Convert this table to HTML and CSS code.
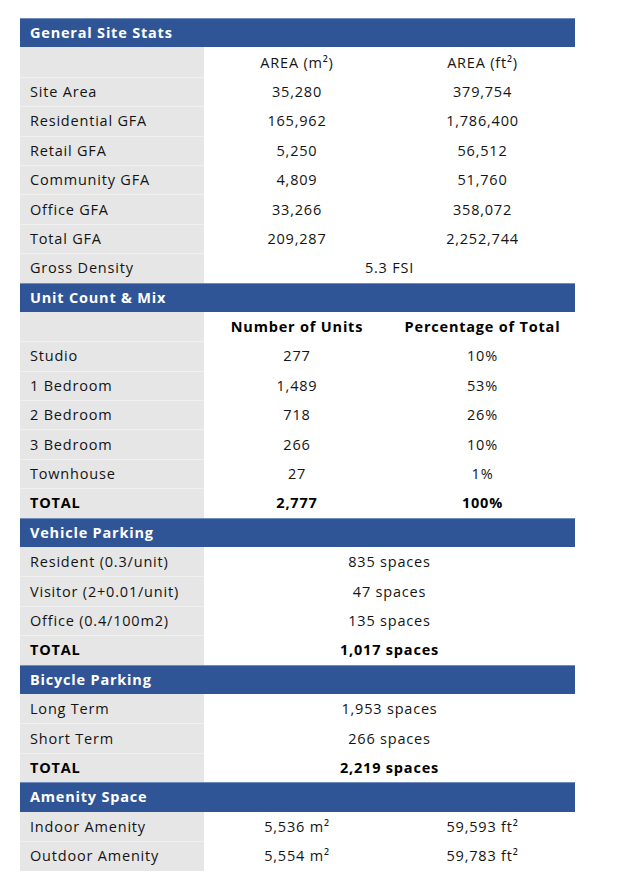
FILE: index.html
```html
<!DOCTYPE html>
<html>
<head>
<meta charset="utf-8">
<link rel="stylesheet" href="styles.css">
</head>
<body>
<table class="stats">
  <colgroup><col class="c1"><col class="c2"><col class="c3"></colgroup>
  <tbody>
    <tr class="sec"><th colspan="3">General Site Stats</th></tr>
    <tr><td class="lbl"></td><td>AREA (m²)</td><td>AREA (ft²)</td></tr>
    <tr><td class="lbl">Site Area</td><td>35,280</td><td>379,754</td></tr>
    <tr><td class="lbl">Residential GFA</td><td>165,962</td><td>1,786,400</td></tr>
    <tr><td class="lbl">Retail GFA</td><td>5,250</td><td>56,512</td></tr>
    <tr><td class="lbl">Community GFA</td><td>4,809</td><td>51,760</td></tr>
    <tr><td class="lbl">Office GFA</td><td>33,266</td><td>358,072</td></tr>
    <tr><td class="lbl">Total GFA</td><td>209,287</td><td>2,252,744</td></tr>
    <tr><td class="lbl">Gross Density</td><td colspan="2">5.3 FSI</td></tr>

    <tr class="sec"><th colspan="3">Unit Count &amp; Mix</th></tr>
    <tr class="bold"><td class="lbl"></td><td>Number of Units</td><td>Percentage of Total</td></tr>
    <tr><td class="lbl">Studio</td><td>277</td><td>10%</td></tr>
    <tr><td class="lbl">1 Bedroom</td><td>1,489</td><td>53%</td></tr>
    <tr><td class="lbl">2 Bedroom</td><td>718</td><td>26%</td></tr>
    <tr><td class="lbl">3 Bedroom</td><td>266</td><td>10%</td></tr>
    <tr><td class="lbl">Townhouse</td><td>27</td><td>1%</td></tr>
    <tr class="bold"><td class="lbl">TOTAL</td><td>2,777</td><td>100%</td></tr>

    <tr class="sec"><th colspan="3">Vehicle Parking</th></tr>
    <tr><td class="lbl">Resident (0.3/unit)</td><td colspan="2">835 spaces</td></tr>
    <tr><td class="lbl">Visitor (2+0.01/unit)</td><td colspan="2">47 spaces</td></tr>
    <tr><td class="lbl">Office (0.4/100m2)</td><td colspan="2">135 spaces</td></tr>
    <tr class="bold"><td class="lbl">TOTAL</td><td colspan="2">1,017 spaces</td></tr>

    <tr class="sec"><th colspan="3">Bicycle Parking</th></tr>
    <tr><td class="lbl">Long Term</td><td colspan="2">1,953 spaces</td></tr>
    <tr><td class="lbl">Short Term</td><td colspan="2">266 spaces</td></tr>
    <tr class="bold"><td class="lbl">TOTAL</td><td colspan="2">2,219 spaces</td></tr>

    <tr class="sec"><th colspan="3">Amenity Space</th></tr>
    <tr><td class="lbl">Indoor Amenity</td><td>5,536 m²</td><td>59,593 ft²</td></tr>
    <tr><td class="lbl">Outdoor Amenity</td><td>5,554 m²</td><td>59,783 ft²</td></tr>
  </tbody>
</table>
</body>
</html>
```

FILE: styles.css
```css
html, body {
  margin: 0;
  padding: 0;
  background: #ffffff;
}
body {
  padding: 18px 0 0 20px;
  font-family: "Open Sans", "Liberation Sans", sans-serif;
  font-size: 14.5px;
  letter-spacing: 0.8px;
  color: #141414;
}
.stats {
  width: 555px;
  table-layout: fixed;
  border-collapse: collapse;
  border-spacing: 0;
}
.c1 { width: 184px; }
.c2 { width: 186px; }
.c3 { width: 185px; }
.stats tr { height: 29.4px; }
.stats th,
.stats td {
  padding: 0;
  vertical-align: middle;
  line-height: 18px;
  white-space: nowrap;
}
.stats td {
  text-align: center;
  border-top: 1px solid #ffffff;
}
.stats td.lbl {
  text-align: left;
  padding-left: 10px;
  background: #e6e6e6;
  border-top-color: #f0f0f0;
}
.sec th {
  background: #2f5597;
  color: #ffffff;
  font-weight: 700;
  text-align: left;
  padding-left: 10px;
  border-top: 1px solid #6f8cbd;
}
.sec + tr td,
.sec + tr td.lbl { border-top-color: #e6e6e6; }
.sec + tr td:not(.lbl) { border-top-color: #ffffff; }
.bold td { font-weight: 700; color: #000000; }
```
